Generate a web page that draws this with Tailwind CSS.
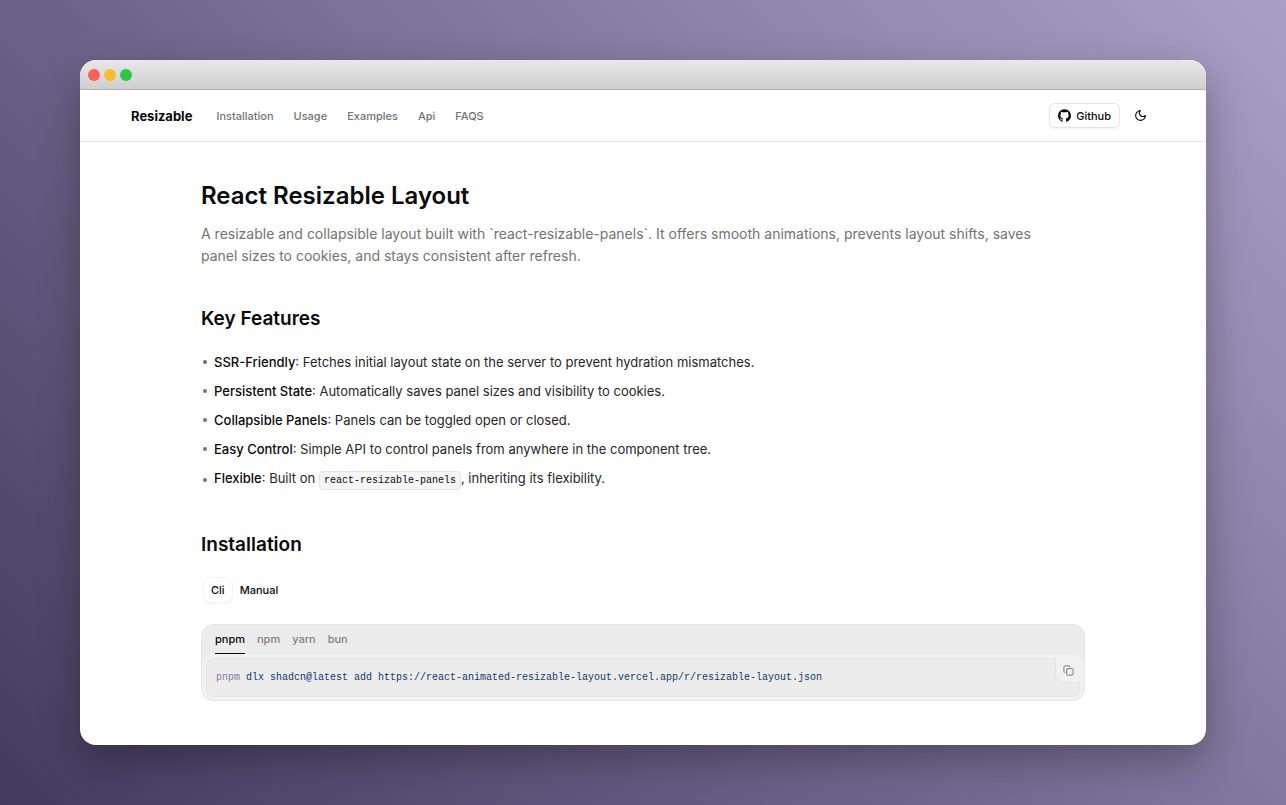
<!DOCTYPE html>
<html lang="en">
<head>
<meta charset="utf-8">
<meta name="viewport" content="width=device-width, initial-scale=1">
<title>React Resizable Layout</title>
<script src="https://cdn.jsdelivr.net/npm/@tailwindcss/browser@4"></script>
</head>
<body class="flex min-h-screen flex-col bg-linear-[45deg,#433b5d,#a8a0c7] px-20 py-[60px] font-['Inter',sans-serif] text-[#0a0a0a]">
<div class="flex grow flex-col overflow-hidden rounded-2xl bg-white shadow-[0_16px_40px_rgba(0,0,0,0.3)]">
  <div class="flex h-[30px] items-center gap-1 border-b border-[#aeaeae] bg-linear-to-b from-[#e8e8e8] to-[#cfcfcf] px-2">
    <span class="size-3 rounded-full bg-[#ff5f57]"></span>
    <span class="size-3 rounded-full bg-[#fbbb2f]"></span>
    <span class="size-3 rounded-full bg-[#28c840]"></span>
  </div>

  <header class="border-b border-[#e5e5e5]">
    <div class="mx-auto flex h-[51px] max-w-[1024px] items-center justify-between">
      <div class="flex items-center gap-6">
        <a href="#" class="text-[13px] leading-5 font-bold">Resizable</a>
        <nav class="flex items-center gap-5 text-[11px] leading-5 font-medium text-[#737373]">
          <a href="#installation">Installation</a>
          <a href="#usage">Usage</a>
          <a href="#examples">Examples</a>
          <a href="#api">Api</a>
          <a href="#faqs">FAQS</a>
        </nav>
      </div>
      <div class="flex items-center gap-2">
        <a href="#github" class="flex h-[25px] items-center gap-[5px] rounded-md border border-[#e5e5e5] px-2 text-[11px] leading-5 font-medium shadow-xs">
          <svg class="size-[13px]" viewBox="0 0 24 24" fill="currentColor" aria-hidden="true"><path d="M12 .297c-6.63 0-12 5.373-12 12 0 5.303 3.438 9.8 8.205 11.385.6.113.82-.258.82-.577 0-.285-.01-1.04-.015-2.04-3.338.724-4.042-1.61-4.042-1.61C4.422 18.07 3.633 17.7 3.633 17.7c-1.087-.744.084-.729.084-.729 1.205.084 1.838 1.236 1.838 1.236 1.07 1.835 2.809 1.305 3.495.998.108-.776.417-1.305.76-1.605-2.665-.3-5.466-1.332-5.466-5.93 0-1.31.465-2.38 1.235-3.22-.135-.303-.54-1.523.105-3.176 0 0 1.005-.322 3.3 1.23.96-.267 1.98-.399 3-.405 1.02.006 2.04.138 3 .405 2.28-1.552 3.285-1.23 3.285-1.23.645 1.653.24 2.873.12 3.176.765.84 1.23 1.91 1.23 3.22 0 4.61-2.805 5.625-5.475 5.92.42.36.81 1.096.81 2.22 0 1.606-.015 2.896-.015 3.286 0 .315.21.69.825.57C20.565 22.092 24 17.592 24 12.297c0-6.627-5.373-12-12-12"/></svg>
          Github
        </a>
        <button type="button" aria-label="Toggle theme" class="mr-[3px] flex size-6 items-center justify-center">
          <svg class="size-[13px]" viewBox="0 0 24 24" fill="none" stroke="currentColor" stroke-width="2" stroke-linecap="round" stroke-linejoin="round" aria-hidden="true"><path d="M12 3a6 6 0 0 0 9 9 9 9 0 1 1-9-9Z"/></svg>
        </button>
      </div>
    </div>
  </header>

  <main class="mx-auto w-full max-w-[884px] pt-[38px]">
    <h1 class="text-2xl font-semibold">React Resizable Layout</h1>
    <p class="mt-[11px] max-w-[860px] text-[14px] leading-[22px] text-[#737373]">A resizable and collapsible layout built with `react-resizable-panels`. It offers smooth animations, prevents layout shifts, saves panel sizes to cookies, and stays consistent after refresh.</p>

    <h2 class="mt-[39px] text-[19px] leading-[26px] font-semibold">Key Features</h2>
    <ul class="mt-5 grid gap-[9px] text-[13px] leading-5 text-[#262626]">
      <li class="flex items-center gap-[7px]"><span class="ml-0.5 size-1 rounded-full bg-[#737373]"></span><span><strong class="font-medium text-[#0a0a0a]">SSR-Friendly</strong>: Fetches initial layout state on the server to prevent hydration mismatches.</span></li>
      <li class="flex items-center gap-[7px]"><span class="ml-0.5 size-1 rounded-full bg-[#737373]"></span><span><strong class="font-medium text-[#0a0a0a]">Persistent State</strong>: Automatically saves panel sizes and visibility to cookies.</span></li>
      <li class="flex items-center gap-[7px]"><span class="ml-0.5 size-1 rounded-full bg-[#737373]"></span><span><strong class="font-medium text-[#0a0a0a]">Collapsible Panels</strong>: Panels can be toggled open or closed.</span></li>
      <li class="flex items-center gap-[7px]"><span class="ml-0.5 size-1 rounded-full bg-[#737373]"></span><span><strong class="font-medium text-[#0a0a0a]">Easy Control</strong>: Simple API to control panels from anywhere in the component tree.</span></li>
      <li class="flex items-center gap-[7px]"><span class="ml-0.5 size-1 rounded-full bg-[#737373]"></span><span><strong class="font-medium text-[#0a0a0a]">Flexible</strong>: Built on <code class="rounded-sm border border-[#e5e5e5] bg-[#f5f5f5] px-1 py-[3px] font-['Liberation_Mono',monospace] text-[10px] text-[#0a0a0a]">react-resizable-panels</code>, inheriting its flexibility.</span></li>
    </ul>

    <h2 id="installation" class="mt-[41px] text-[19px] leading-[26px] font-semibold">Installation</h2>
    <div class="mt-[19px] flex items-center text-[11px] font-medium" role="tablist" aria-label="Install method">
      <button type="button" role="tab" aria-selected="true" class="ml-0.5 h-[26px] rounded-lg border border-[#f5f5f5] px-[7px] shadow-xs">Cli</button>
      <button type="button" role="tab" aria-selected="false" class="h-[26px] px-[7px]">Manual</button>
    </div>

    <section class="mt-[21px] overflow-hidden rounded-xl border border-[#e5e5e5] bg-[#ececec]">
      <div class="flex h-[29px] gap-3 px-[13px] text-[11px] font-medium text-[#808080]" role="tablist" aria-label="Package manager">
        <button type="button" role="tab" aria-selected="true" class="border-b border-[#0a0a0a] text-[#0a0a0a]">pnpm</button>
        <button type="button" role="tab" aria-selected="false" class="border-b border-transparent">npm</button>
        <button type="button" role="tab" aria-selected="false" class="border-b border-transparent">yarn</button>
        <button type="button" role="tab" aria-selected="false" class="border-b border-transparent">bun</button>
      </div>
      <div class="rounded-xl bg-[#f1f1f1] px-1 pt-1 pb-[3px]">
        <div class="relative rounded-lg border border-[#e4e4e4] bg-[#ececec]">
          <pre class="px-[9px] pt-[9px] pb-2 font-['Liberation_Mono',monospace] text-[10px] leading-5 text-[#12386c]"><code class="font-['Liberation_Mono',monospace]"><span class="text-[#8578ac]">pnpm</span> dlx shadcn@latest add https://react-animated-resizable-layout.vercel.app/r/resizable-layout.json</code></pre>
          <button type="button" aria-label="Copy command" class="absolute -top-px -right-px flex size-[25px] items-center justify-center rounded-bl-lg border-b border-l border-[#e4e4e4] bg-[#f1f1f1] text-[#737373]">
            <svg class="size-[11px]" viewBox="0 0 24 24" fill="none" stroke="currentColor" stroke-width="2" stroke-linecap="round" stroke-linejoin="round" aria-hidden="true"><rect x="8" y="8" width="14" height="14" rx="2"/><path d="M4 16c-1.1 0-2-.9-2-2V4c0-1.1.9-2 2-2h10c1.1 0 2 .9 2 2"/></svg>
          </button>
        </div>
      </div>
    </section>
  </main>
</div>
</body>
</html>
